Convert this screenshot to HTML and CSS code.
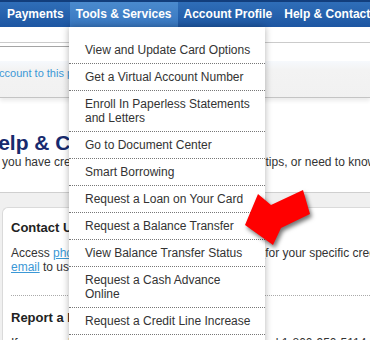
FILE: index.html
```html
<html>
<head>
	<title>Help &amp; Contact Us</title>
<link rel="stylesheet" href="styles.css">
</head>
<body>

<div class="nav">
	<a class="tab">Payments</a>
	<a class="tab tab-on">Tools &amp; Services</a>
	<a class="tab">Account Profile</a>
	<a class="tab">Help &amp; Contact Us</a>
</div>
<div class="subnav"></div>

<div class="notice">
	<div class="notice-rule"></div>
	<div class="banner"><a class="banner-link">account to this profile</a></div>
</div>

<div class="content">
	<h1 class="title">Help &amp; Contact Us</h1>
	<p class="intro">If you have credit card questions, want helpful card tips, or need to know more about your account</p>

	<div class="panel">
		<div class="card">
			<h3 class="card-head">Contact Us</h3>
			<p class="card-text">Access <a class="link">phone numbers plus mailing addresses </a>for your specific credit card questions, or send an<br>
			<a class="link">email</a> to us securely.</p>
			<div class="dots"></div>
			<h3 class="card-head">Report a Lost or Stolen Card</h3>
			<p class="card-text">If your cards were lost or stolen, call our dedicated 1-800-950-5114 line.</p>
		</div>
	</div>
</div>

<ul class="menu">
	<li>View and Update Card Options</li>
	<li>Get a Virtual Account Number</li>
	<li>Enroll In Paperless Statements and Letters</li>
	<li>Go to Document Center</li>
	<li>Smart Borrowing</li>
	<li>Request a Loan on Your Card</li>
	<li>Request a Balance Transfer</li>
	<li>View Balance Transfer Status</li>
	<li>Request a Cash Advance Online</li>
	<li>Request a Credit Line Increase</li>
	<li>Manage Authorized Users</li>
</ul>

<svg class="arrow" width="84" height="68" viewBox="0 0 84 68">
	<polygon points="9,41 22,10 35,21 67,6 74,30 45,44 37,61" fill="#ff0000"/>
</svg>

</body>
</html>
```

FILE: styles.css
```css
BODY {margin:0; overflow:hidden; width:370px; height:340px; position:relative; background:white; color:#333; font-family: "Liberation Sans", Arial, Helvetica, sans-serif; font-size:12px;}

/* top navigation */
.nav {display:flex; height:25px; padding-left:1px; border-top:2px solid #123e7c; background:linear-gradient(#2f6eb8, #1d56a2); white-space:nowrap;}
.tab {padding:0 6px; line-height:25px; color:white; font-weight:bold; font-size:12px;}
.tab-on {background:linear-gradient(#4a8ace, #3776bf);}
.subnav {height:15px; border-bottom:1px solid #cbcbcb;}

/* notice strip */
.notice {margin-top:3px;}
.notice-rule {width:250px; height:14px; border-top:1px solid #a5a5a5;}
.banner {height:36px; border-bottom:1px solid #c4c4c4; background:linear-gradient(#f6f9fd, #f3f3f3 25%, #f1f1f1); box-shadow:0 3px 4px rgba(0,0,0,0.08);}
.banner-link {display:block; margin-left:-7px; padding-top:6px; line-height:13px; font-size:11px; color:#3b98d6; white-space:nowrap;}

/* page body */
.content {padding-top:33px;}
.title {margin:0 0 0 -17px; line-height:24px; font-size:21px; font-weight:bold; color:#172a6e; white-space:nowrap;}
.intro {margin:0 0 0 -8px; line-height:15px; white-space:nowrap;}
.panel {margin-top:22px; padding:14px 0 0 2px; border-top:1px solid #cfcfcf; background:#f0f0f0;}
.card {padding:12px 0 0 8px; border:1px solid #dadada; border-right:none; border-radius:6px 0 0 0; background:white; white-space:nowrap;}
.card-head {margin:0; line-height:16px; font-size:13px; font-weight:bold; color:#222;}
.card-text {margin:10px 0 0 0; line-height:14px;}
.link {color:#3b98d6; text-decoration:underline;}
.dots {margin-top:21px; height:0; border-top:1px dotted #aaa;}
.dots + .card-head {margin-top:14px;}

/* dropdown */
.menu {position:absolute; top:27px; left:69px; width:196px; margin:0; padding:10px 0 0 0; list-style:none; background:white; box-shadow:0 0 7px rgba(0,0,0,0.3);}
.menu LI {padding:6px 7px 6px 16px; line-height:14px; border-bottom:1px dotted #777; color:#333;}

.arrow {position:absolute; left:236px; top:184px; filter:drop-shadow(2px 3px 2px rgba(0,0,0,0.55));}
```
